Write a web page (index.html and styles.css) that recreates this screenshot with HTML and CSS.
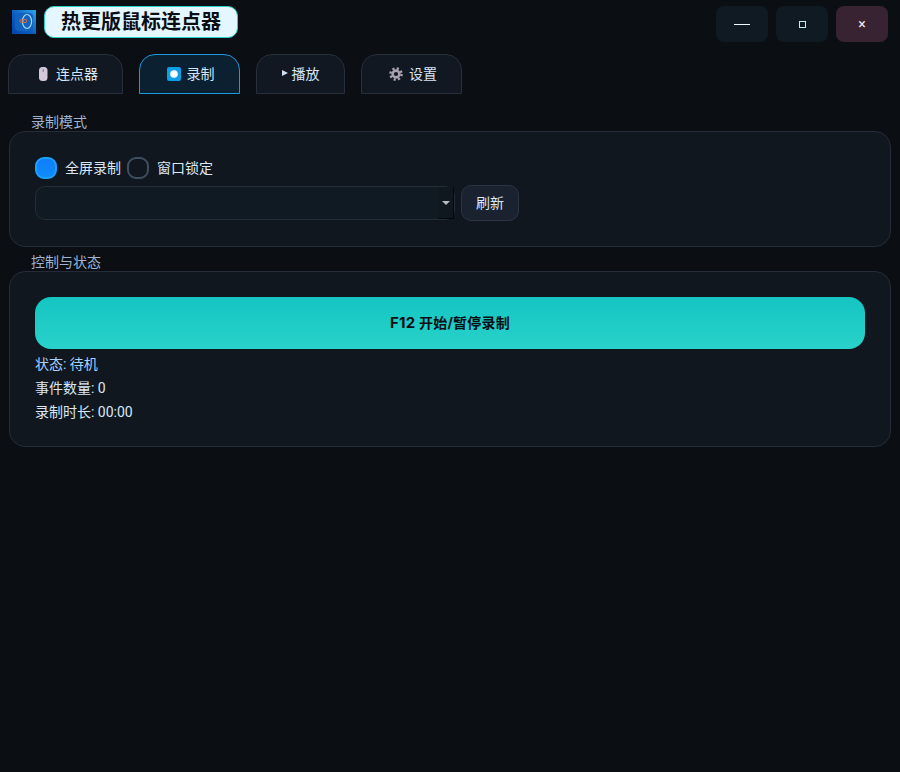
FILE: index.html
```html
<!DOCTYPE html>
<html lang="zh-CN">
<head>
<meta charset="utf-8">
<title>热更版鼠标连点器</title>
<link rel="stylesheet" href="styles.css">
</head>
<body>
<div class="app">
  <header class="titlebar">
    <svg class="logo" width="24" height="24" viewBox="0 0 24 24">
      <defs><linearGradient id="lg" x1="1" y1="0" x2="0" y2="1"><stop offset="0" stop-color="#2aa6e8"/><stop offset=".55" stop-color="#0a5cc0"/><stop offset="1" stop-color="#0643a8"/></linearGradient></defs>
      <rect width="24" height="24" fill="url(#lg)"/>
      <rect x="3" y="3" width="18" height="18" rx="4" fill="#0f62bd"/>
      <ellipse cx="15" cy="11.5" rx="4.6" ry="7" fill="none" stroke="#a8d4f0" stroke-width="1.2"/>
      <circle cx="9.5" cy="11" r="1.7" fill="none" stroke="#d0704a" stroke-width="1"/>
      <circle cx="13" cy="11" r="1.7" fill="none" stroke="#d0704a" stroke-width="1"/>
    </svg>
    <div class="app-title">热更版鼠标连点器</div>
    <div class="win-buttons">
      <button class="win-btn"><span class="glyph-min"></span></button>
      <button class="win-btn"><span class="glyph-max"></span></button>
      <button class="win-btn win-close"><span class="glyph-close">×</span></button>
    </div>
  </header>

  <nav class="tabs">
    <div class="tab tab-clicker">
      <svg width="12" height="16" viewBox="0 0 12 16"><rect x="2" y="1" width="8.5" height="14" rx="3.5" fill="#d4c8dc"/><rect x="5.6" y="3" width="1.2" height="3" fill="#8d8596"/></svg>
      <span class="tab-label">连点器</span>
    </div>
    <div class="tab tab-active tab-record">
      <svg width="14" height="14" viewBox="0 0 14 14"><rect width="14" height="14" rx="2" fill="#0ea0e6"/><circle cx="7" cy="7" r="3.8" fill="#fff"/></svg>
      <span class="tab-label">录制</span>
    </div>
    <div class="tab tab-play">
      <svg width="6" height="6" viewBox="0 0 6 6"><path d="M0 0L6 3L0 6Z" fill="#cfe0f5"/></svg>
      <span class="tab-label">播放</span>
    </div>
    <div class="tab tab-settings">
      <svg width="14" height="14" viewBox="0 0 14 14"><circle cx="7" cy="7" r="3.4" fill="none" stroke="#a9a0b0" stroke-width="2.6"/><circle cx="7" cy="7" r="5.6" fill="none" stroke="#a9a0b0" stroke-width="2.4" stroke-dasharray="2.2 2.2"/></svg>
      <span class="tab-label">设置</span>
    </div>
  </nav>

  <section class="group group-mode">
    <div class="group-title">录制模式</div>
    <div class="group-box">
      <div class="radio-row">
        <label class="radio"><span class="indicator indicator-on"></span><span class="radio-label">全屏录制</span></label>
        <label class="radio"><span class="indicator"></span><span class="radio-label">窗口锁定</span></label>
      </div>
      <div class="combo-row">
        <div class="combo"><div class="combo-drop"><span class="arrow"></span></div></div>
        <button class="btn-refresh">刷新</button>
      </div>
    </div>
  </section>

  <section class="group group-control">
    <div class="group-title">控制与状态</div>
    <div class="group-box">
      <button class="btn-start"><span class="hotkey">F12</span> 开始/暂停录制</button>
      <div class="status-list">
        <div class="status status-state">状态: 待机</div>
        <div class="status">事件数量: 0</div>
        <div class="status">录制时长: 00:00</div>
      </div>
    </div>
  </section>
</div>
</body>
</html>
```

FILE: styles.css
```css
* { box-sizing: border-box; }
html, body { margin: 0; height: 100%; }
body {
  background: #0b0e13;
  color: #dbe8f7;
  font-family: Roboto, "Noto Sans CJK SC", sans-serif;
  font-size: 14px;
  overflow: hidden;
}
button { font-family: inherit; font-size: 14px; cursor: pointer; }
.app { padding: 6px 9px 0; }

.titlebar { display: flex; align-items: flex-start; height: 36px; padding-left: 3px; padding-right: 3px; }
.logo { margin-top: 4px; flex: none; }
.app-title {
  margin-left: 8px;
  width: 194px;
  height: 32px;
  background: #e4f6ff;
  border: 1px solid #2fd0cb;
  border-radius: 10px;
  color: #0b0f14;
  font-size: 20px;
  font-weight: 700;
  line-height: 30px;
  text-align: center;
}
.win-buttons { display: flex; gap: 8px; margin-left: auto; }
.win-btn {
  display: flex; align-items: center; justify-content: center;
  width: 52px; height: 36px;
  background: #101a22;
  border: 0;
  border-radius: 8px;
  padding: 0;
}
.win-close { background: #372331; }
.glyph-min { width: 16px; height: 1px; background: #f0f7ff; }
.glyph-max { width: 7px; height: 7px; border: 1px solid #c8eef2; }
.glyph-close { color: #f2e6ee; font-size: 14px; line-height: 14px; }

.tabs { display: flex; gap: 16px; margin: 12px 0 0 -1px; height: 40px; }
.tab {
  display: flex; align-items: center; justify-content: center;
  height: 40px;
  background: #111822;
  border: 1px solid #262f3c;
  border-radius: 16px 16px 0 0;
  color: #d6e6f8;
}
.tab-label { padding-bottom: 2px; }
.tab-clicker { width: 115px; gap: 7px; padding-left: 4px; }
.tab-record { width: 101px; gap: 6px; padding-left: 2px; background: #0b2030; border-color: #1c98dc; }
.tab-play { width: 89px; gap: 4px; }
.tab-play svg { margin-top: -3px; }
.tab-settings { width: 101px; gap: 6px; padding-left: 3px; }

.group-mode { margin-top: 20px; }
.group-control { margin-top: 7px; }
.group-title {
  height: 17px;
  padding-left: 22px;
  color: #9fb4d0;
  line-height: 16px;
}
.group-box {
  width: 882px;
  background: #10171f;
  border: 1px solid #232c38;
  border-radius: 16px;
  padding: 25px;
}
.group-mode .group-box { height: 116px; }
.group-control .group-box { height: 176px; }

.radio-row { display: flex; gap: 6px; height: 22px; }
.radio { display: flex; align-items: center; gap: 8px; }
.radio-label { padding-bottom: 2px; }
.indicator {
  width: 22px; height: 22px;
  border: 2px solid #3d4f61;
  border-radius: 9px;
  background: #10171f;
}
.indicator-on {
  border-color: #1aa0ff;
  background: linear-gradient(#0f7dfa, #0f8cfc);
}
.combo-row { display: flex; align-items: center; gap: 6px; margin-top: 6px; height: 36px; }
.combo {
  position: relative;
  width: 420px; height: 34px;
  background: #101a23;
  border: 1px solid #232e3a;
  border-radius: 10px;
}
.combo-drop {
  position: absolute; right: 0; top: 0; bottom: 0;
  width: 16px;
  background: #0f181f;
  border-right: 1px solid #05080b;
  border-bottom: 1px solid #05080b;
  display: flex; align-items: center; justify-content: center;
}
.arrow {
  width: 0; height: 0;
  border-left: 4.5px solid transparent;
  border-right: 4.5px solid transparent;
  border-top: 4px solid #b6bcc2;
}
.btn-refresh {
  width: 58px; height: 36px;
  background: #1a2230;
  border: 1px solid #2a3442;
  border-radius: 10px;
  color: #dbe8f7;
  padding: 0 0 2px;
}
.btn-start {
  display: block;
  width: 830px; height: 52px;
  border: 0;
  border-radius: 16px;
  background: linear-gradient(#14c5c2, #29d2ca);
  color: #0b0f14;
  font-family: Inter, "Noto Sans CJK SC", sans-serif;
  font-weight: 700;
  letter-spacing: .25px;
  padding: 0 0 2px;
}
.hotkey { font-size: 15px; }
.status-list { margin-top: 3px; }
.status { height: 24px; line-height: 24px; color: #d9e8f8; }
.status-state { color: #a9d2ff; }
```
